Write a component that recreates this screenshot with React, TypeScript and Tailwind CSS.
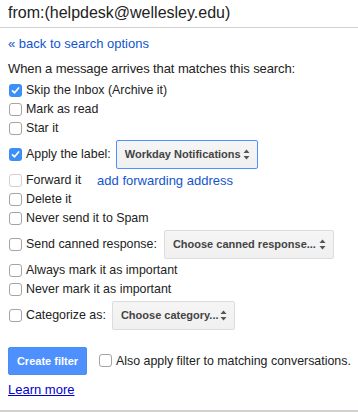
import React from 'react';

function Box({ checked = false, muted = false }: { checked?: boolean; muted?: boolean }) {
    if (checked) {
        return (
            <span className="flex h-[13px] w-[13px] shrink-0 items-center justify-center rounded-[3px] bg-[#3b8ff6]">
                <svg width="9" height="9" viewBox="0 0 9 9">
                    <path d="M1.5 4.8 L3.6 6.8 L7.6 2" fill="none" stroke="#fff" strokeWidth="1.7" strokeLinecap="round" strokeLinejoin="round" />
                </svg>
            </span>
        );
    }
    return (
        <span
            className={
                muted
                    ? 'h-[13px] w-[13px] shrink-0 rounded-[3px] border border-[#cfcfcf] bg-white'
                    : 'h-[13px] w-[13px] shrink-0 rounded-[3px] border border-[#a4a4a4] bg-white'
            }
        />
    );
}

function Arrows() {
    return (
        <svg width="7" height="11" viewBox="0 0 7 11" className="shrink-0">
            <path d="M3.5 0.5 L6.5 4 L0.5 4 Z" fill="#555" />
            <path d="M3.5 10.5 L6.5 7 L0.5 7 Z" fill="#555" />
        </svg>
    );
}

function Select({ label, width, focused = false }: { label: string; width: string; focused?: boolean }) {
    return (
        <div
            className={
                (focused ? 'border-[#4d90fe] ' : 'border-[#dcdcdc] ') +
                width +
                ' flex h-[29px] items-center justify-between rounded-[2px] border bg-gradient-to-b from-[#f5f5f5] to-[#f0f0f0] pl-[8px] pr-[7px] text-[11px] font-bold text-[#444]'
            }
        >
            <span className="whitespace-nowrap">{label}</span>
            <Arrows />
        </div>
    );
}

function Row({ children, checked = false, muted = false }: { children: React.ReactNode; checked?: boolean; muted?: boolean }) {
    return (
        <div className="flex h-[19px] items-center gap-[4px] pl-[1px]">
            <Box checked={checked} muted={muted} />
            {children}
        </div>
    );
}

function SelectRow({ text, children, gap }: { text: string; children: React.ReactNode; gap: string }) {
    return (
        <div className="flex h-[33px] items-center pl-[1px]">
            <Box />
            <span className="ml-[4px] whitespace-nowrap">{text}</span>
            <div className={gap}>{children}</div>
        </div>
    );
}

export default function App() {
    return (
        <div className="box-border flex h-[412px] w-[358px] flex-col overflow-hidden border-b-2 border-[#d2d2cb] bg-white font-['Liberation_Sans',Arial,sans-serif] text-[13px] text-[#222]">
            <div className="flex h-[28px] items-start border-b border-[#d0d0d0] pl-[8px] pt-[3px] text-[16px] leading-[20px] text-[#222]">
                from:(helpdesk@wellesley.edu)
            </div>

            <div className="px-[8px]">
                <div className="mt-[8px] leading-[16px] text-[#1155cc]">« back to search options</div>
                <div className="mt-[9px] leading-[16px] tracking-[-0.1px]">When a message arrives that matches this search:</div>

                <div className="mt-[4px] text-[12.4px]">
                    <Row checked>Skip the Inbox (Archive it)</Row>
                    <Row>Mark as read</Row>
                    <Row>Star it</Row>

                    <div className="flex h-[33px] items-center pl-[1px]">
                        <Box checked />
                        <span className="ml-[4px]">Apply the label:</span>
                        <div className="ml-[5px]">
                            <Select label="Workday Notifications" width="w-[142px]" focused />
                        </div>
                    </div>

                    <div className="flex h-[19px] items-center pl-[1px]">
                        <Box muted />
                        <span className="ml-[4px]">Forward it</span>
                        <span className="ml-[16px] text-[13px] text-[#1155cc]">add forwarding address</span>
                    </div>
                    <Row>Delete it</Row>
                    <Row>Never send it to Spam</Row>

                    <SelectRow text="Send canned response:" gap="ml-[7px]">
                        <Select label="Choose canned response..." width="w-[170px]" />
                    </SelectRow>

                    <Row>Always mark it as important</Row>
                    <Row>Never mark it as important</Row>

                    <SelectRow text="Categorize as:" gap="ml-[6px]">
                        <Select label="Choose category..." width="w-[123px]" />
                    </SelectRow>
                </div>

                <div className="mt-[15px] flex items-center">
                    <button className="h-[28px] w-[79px] shrink-0 rounded-[2px] border border-[#4a8ef5] bg-[#4d90fe] text-[11px] font-bold text-white">
                        Create filter
                    </button>
                    <div className="ml-[12px] flex items-center gap-[4px] text-[12.4px]">
                        <Box />
                        <span className="whitespace-nowrap">Also apply filter to matching conversations.</span>
                    </div>
                </div>

                <div className="mt-[7px] leading-[16px]">
                    <span className="text-[#0000cc] underline">Learn more</span>
                </div>
            </div>
        </div>
    );
}
